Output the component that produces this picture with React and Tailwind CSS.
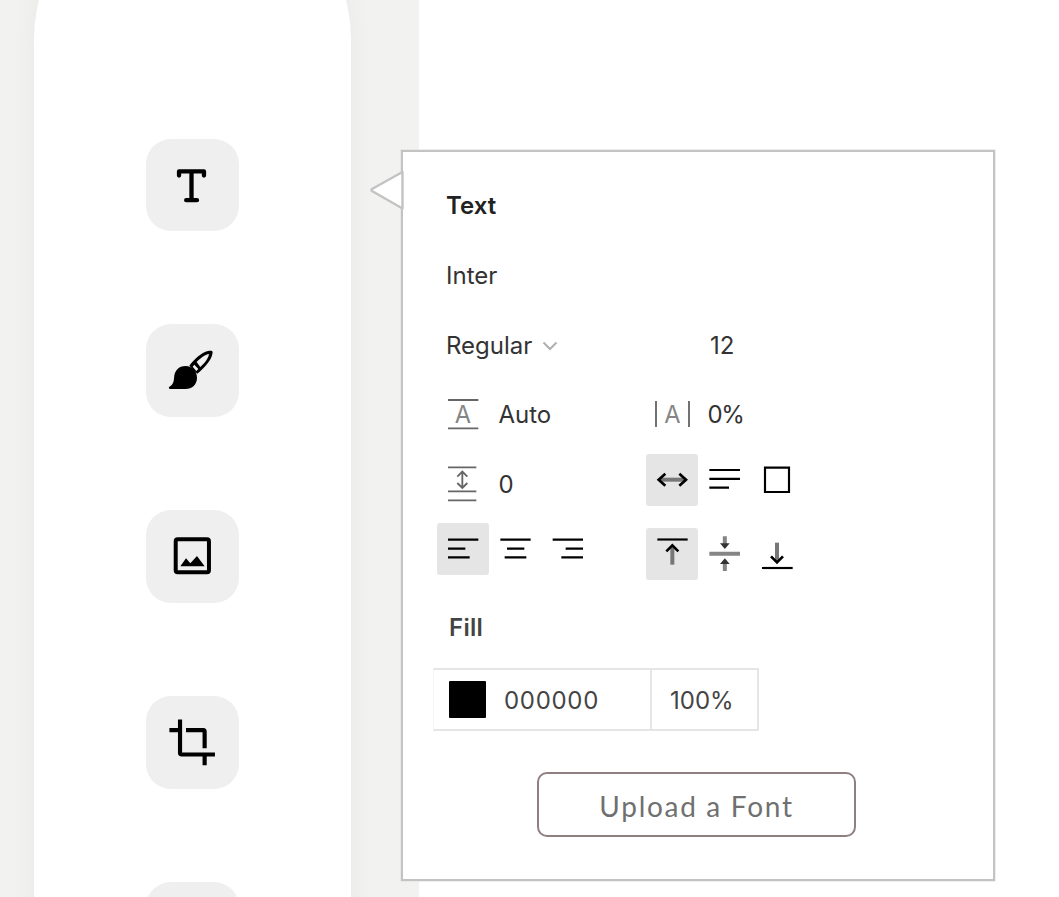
import React from "react";

function Tile({ label, viewBox, children }) {
  return (
    <button
      aria-label={label}
      className="h-[92.75px] w-[93px] shrink-0 rounded-[25px] bg-[#efefef]"
    >
      {viewBox && (
        <svg viewBox={viewBox} className="block h-full w-full" fill="none">
          {children}
        </svg>
      )}
    </button>
  );
}

function Toolbar() {
  return (
    <aside className="flex h-[897px] w-[419px] shrink-0 overflow-hidden bg-[#f2f2f0] pl-[34px]">
      <nav className="-mt-[119px] flex h-[1200px] w-[317px] shrink-0 flex-col items-center gap-[93px] rounded-t-full bg-white pt-[257.5px] shadow-[0_0_28px_rgba(0,0,0,0.045)]">
        <Tile label="Text" viewBox="438 414 279 279">
          <path
            d="M537 524V511.500H612V524M574.500 511.500V598M558.500 598H591"
            stroke="#000"
            strokeWidth="13"
            strokeLinecap="round"
            strokeLinejoin="round"
          />
        </Tile>
        <Tile label="Brush" viewBox="18 11.5 279 279">
          <path
            d="M88 200C98 195 101 187 102 174C103 152 116 138 137 138C157 138 171 153 171 173C171 193 157 207 136 207H91C86 207 85 202 88 200Z"
            fill="#000"
          />
          <path
            d="M148 137C162 118 184 98 204 93C213 91 219 92 218 98C216 120 191 146 172 161Z"
            fill="#000"
          />
          <path d="M170 126C181 114 195 104 207 102C206 115 193 130 181 141Z" fill="#efefef" />
          <path d="M158 140L163 134L175 147L169 153Z" fill="#efefef" />
        </Tile>
        <Tile label="Image" viewBox="18 29 279 279">
          <rect x="107" y="117" width="100" height="99" rx="6" stroke="#000" strokeWidth="12" />
          <path d="M121 198L138 174L151 189L171 167L194 198Z" fill="#000" />
        </Tile>
        <Tile label="Crop" viewBox="18 17 279 279">
          <path
            d="M88 119.500H114M120 88V188Q120 193 125 193H225M138 119.500H190Q194 119.500 194 124V174M194 199V225"
            stroke="#000"
            strokeWidth="12.500"
          />
        </Tile>
        <Tile label="More" />
      </nav>
    </aside>
  );
}

function Option({ label, active, viewBox, children }) {
  return (
    <button
      aria-label={label}
      className={
        active
          ? "h-[52px] w-[52px] shrink-0 rounded-[3px] bg-[#e5e5e5]"
          : "h-[52px] w-[52px] shrink-0"
      }
    >
      <svg
        viewBox={viewBox}
        className="block h-full w-full"
        fill="none"
        stroke="#000"
        strokeWidth="6.500"
      >
        {children}
      </svg>
    </button>
  );
}

function Field({ viewBox, value, children }) {
  return (
    <div className="flex h-[70px] items-center">
      <svg
        viewBox={viewBox}
        className="h-[70px] w-[52px] shrink-0"
        fill="none"
        stroke="#666"
        strokeWidth="5.500"
      >
        {children}
      </svg>
      <span className="ml-[9.5px]">{value}</span>
    </div>
  );
}

function LetterA({ x, y }) {
  return (
    <text
      x={x}
      y={y}
      textAnchor="middle"
      stroke="none"
      fill="#858585"
      className="font-['Inter',sans-serif] text-[71px]"
    >
      A
    </text>
  );
}

function TextPanel() {
  return (
    <section className="relative -ml-[18px] mt-[150px] flex h-[731px] w-[594px] shrink-0 flex-col border-2 border-[#c3c3c3] bg-white pt-[18px] font-['Inter',sans-serif] text-[24px] leading-[30px] text-[#333] shadow-[0_0_0_0.5px_#dedede]">
      <svg
        viewBox="0 0 38 42"
        className="absolute -left-[34px] top-[17px] h-[42px] w-[38px]"
        fill="#fff"
        stroke="#c3c3c3"
        strokeWidth="2.4"
        strokeLinejoin="round"
      >
        <path d="M33.500 3V39.500L3 22Q1.800 21 3 20Z" />
      </svg>

      <div className="flex pl-[34px]">
        <div className="flex w-[209px] flex-col">
          <h2 className="flex h-[70px] items-center pl-[9px] pt-[2px] font-semibold text-[#222]">Text</h2>
          <div className="flex h-[70px] items-center pl-[9px] pt-[2px]">Inter</div>
          <div className="flex h-[70px] items-center gap-[10px] pl-[9px] pt-[2px]">
            <span>Regular</span>
            <svg viewBox="0 0 16 10" className="h-[10px] w-[16px]" fill="none" stroke="#b0b0b0" strokeWidth="2">
              <path d="M1.500 1.500L8 8L14.500 1.500" />
            </svg>
          </div>
          <Field viewBox="21 0 156 210" value="Auto">
            <path d="M54 60H145M54 145H145" />
            <LetterA x={99} y={128} />
          </Field>
          <Field viewBox="21 210 156 210" value="0">
            <path d="M54 262H139M54 334H139M54 361H139M97 275V323M82 290L97 275L112 290M82 309L97 324L112 309" />
          </Field>
          <div className="mt-[3px] flex">
            <Option label="Align left" active viewBox="21 428 156 156">
              <path d="M54 478H145M54 505H106M54 531H119" />
            </Option>
            <Option label="Align center" viewBox="177 428 156 156">
              <path d="M211 478H302M231 505H283M224 531H289" />
            </Option>
            <Option label="Align right" viewBox="333 428 156 156">
              <path d="M368 478H459M407 505H459M394 531H459" />
            </Option>
          </div>
        </div>

        <div className="flex flex-col pt-[140px]">
          <div className="flex h-[70px] items-center pl-[64px] pt-[2px]">12</div>
          <Field viewBox="48 210 156 210" value={<span className="tracking-[-1.3px]">0%</span>}>
            <path d="M78 273V351M177 273V351" />
            <LetterA x={127} y={338} />
          </Field>
          <div className="mt-[4px] flex">
            <Option label="Auto width" active viewBox="48 432 156 156">
              <path d="M88 509H166" stroke="#777" strokeWidth="12" />
              <path d="M106 491L86 509L106 527M148 491L168 509L148 527" strokeWidth="8" />
            </Option>
            <Option label="Auto height" viewBox="204 431 156 156">
              <path d="M238 479H330M238 505.500H330M238 532H297" />
            </Option>
            <Option label="Fixed size" viewBox="360 431 156 156">
              <path d="M405 472H477V545H405Z" />
            </Option>
          </div>
          <div className="mt-[22px] flex">
            <Option label="Align top" active viewBox="48 654 156 156">
              <path d="M127 708V764" stroke="#777" strokeWidth="12" />
              <path d="M82 688.500H173" />
              <path d="M109 724L127 706L145 724" strokeWidth="8" />
            </Option>
            <Option label="Align middle" viewBox="204 654 156 156">
              <path d="M238 731H330M284.500 679V710M284.500 752V783" stroke="#858585" strokeWidth="12" />
              <path d="M270 700H299L284.500 717ZM270 762H299L284.500 745Z" fill="#333" stroke="none" />
            </Option>
            <Option label="Align bottom" viewBox="360 654 156 156">
              <path d="M441 698V755" stroke="#777" strokeWidth="12" />
              <path d="M396 774H488" />
              <path d="M423 739L441 757L459 739" strokeWidth="8" />
            </Option>
          </div>
        </div>
      </div>

      <h2 className="ml-[46px] mt-[33px] font-semibold tracking-[0.3px] text-[#444]">Fill</h2>
      <div className="ml-[30px] mt-[25px] flex h-[63px] w-[326px] shrink-0 items-center border-2 border-l border-[#e5e5e5] border-l-[#f4f4f4]">
        <div className="flex h-full w-[218px] items-center border-r-2 border-[#e5e5e5] pl-[15px] text-[#444]">
          <span className="h-[37px] w-[37px] rounded-[1px] bg-black" />
          <span className="ml-[18px] pt-[2px] tracking-[0.7px]">000000</span>
        </div>
        <span className="pl-[18px] pt-[2px] text-[#444]">100%</span>
      </div>

      <button className="ml-[134px] mt-[41px] h-[65px] w-[319px] shrink-0 rounded-[10px] border-2 border-[#8f7f80] pt-[2px] font-['Lato',sans-serif] text-[28px] tracking-[1.7px] text-[#707070]">
        Upload a Font
      </button>
    </section>
  );
}

export default function App() {
  return (
    <main className="flex h-[897px] w-[1059px] overflow-hidden bg-white">
      <Toolbar />
      <TextPanel />
    </main>
  );
}
